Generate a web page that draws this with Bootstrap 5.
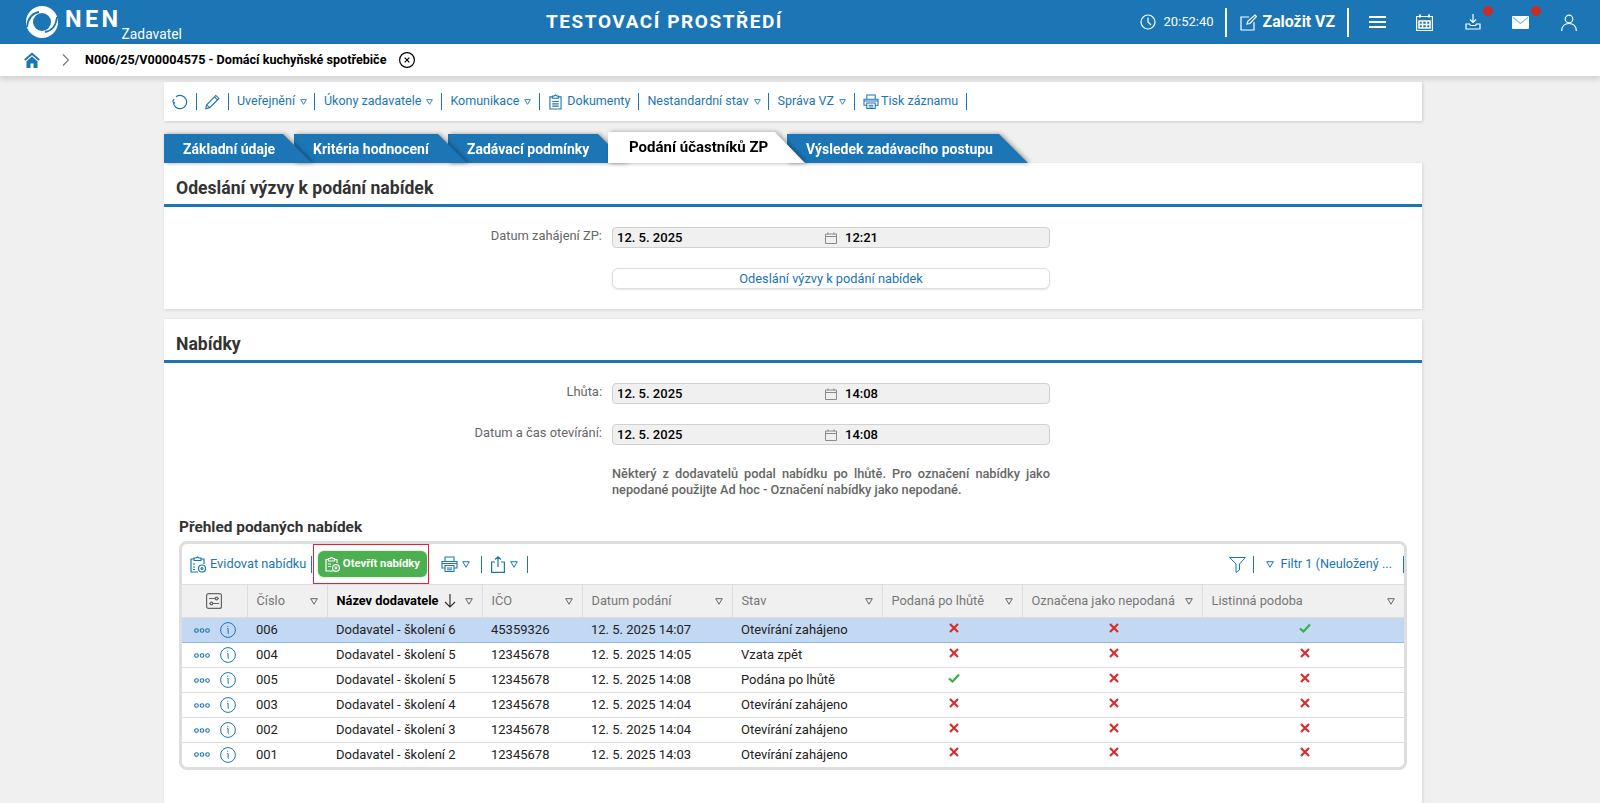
<!DOCTYPE html>
<html lang="cs"><head><meta charset="utf-8"><title>NEN</title>
<link href="https://cdn.jsdelivr.net/npm/bootstrap@5.3.0/dist/css/bootstrap.min.css" rel="stylesheet">
<style>
:root{--nen:#1c75b4}
html,body{height:100%;overflow:hidden}
body{font-family:Roboto,"Liberation Sans",sans-serif;background:#f0f0f0;font-size:13px;color:#222}
svg.i{fill:none;stroke:currentColor;stroke-width:1.2;display:block;flex:none}
.page{height:803px}
.topbar{height:44px;background:var(--nen);color:#fff;padding:0}
.brand-wrap{width:546px;padding-left:26px}
.nen{font-weight:700;font-size:23.5px;letter-spacing:3.4px;margin-left:7px;line-height:1;margin-top:-4px}
.zad{font-size:13.8px;align-self:flex-end;line-height:1;margin-bottom:2px}
.env{font-weight:700;font-size:19px;letter-spacing:1.56px;width:240px;white-space:nowrap}
.tb-right{margin-left:auto;height:44px}
.tb-time{margin-left:7px;margin-right:11px;font-size:13px}
.vbar{width:2px;height:29px;background:#fff}
.zal{font-weight:700;font-size:15.8px;margin:0 12px 0 6px}
.dot{position:absolute;width:10px;height:10px;border-radius:50%;background:#c92a2a;top:-8px;right:-12px}
.crumb{height:32px;background:#fff;padding-left:24px;box-shadow:0 3px 6px rgba(0,0,0,.14);position:relative;z-index:5}
.crumb b{font-weight:700;font-size:12.6px;color:#000;margin-left:16px;margin-right:13px}
.main{width:1258px;margin-left:164px}
.toolbar{height:39px;margin-top:6px;background:#fff;box-shadow:1px 1px 3px rgba(0,0,0,.15);padding-left:8px;color:var(--nen);font-size:12.5px}
.toolbar span.t,.ttb span.t{white-space:nowrap}
.sep{width:1px;height:17px;background:var(--nen);flex:none}
.tri{width:8px;height:7px;color:var(--nen);flex:none}
.toolbar .tri{width:7px;height:6px;margin-left:5px}
.toolbar .sep{margin:0 8.5px 0 7.5px}
.tabs{height:31px;margin-top:11px;align-items:flex-end;position:relative;z-index:2}
.tabw{filter:drop-shadow(2px 0 2px rgba(0,0,0,.35));position:relative}
.tab{display:block;height:29px;background:var(--nen);color:#fff;font-weight:700;font-size:14px;line-height:30px;padding-left:19px;white-space:nowrap;text-decoration:none;clip-path:polygon(0 0,calc(100% - 29px) 0,100% 100%,0 100%)}
.tab.on{height:31px;background:#fff;color:#000;font-size:15px;line-height:30px;padding-left:21px;clip-path:polygon(0 0,calc(100% - 30px) 0,100% 100%,0 100%)}
.sec{background:#fff;box-shadow:1px 1px 3px rgba(0,0,0,.12)}
.sec-h{height:44px;border-bottom:3px solid var(--nen);padding:9px 0 0 12px;font-size:17.6px;font-weight:700;color:#333;line-height:33px;margin:0}
.frow{display:flex;align-items:center;height:21px}
.flab{width:438px;text-align:right;color:#666;font-size:12.9px;margin-right:10px;margin-top:-4px}
.fld{width:438px;height:21px;background:#f0f0f0;border:1px solid #d0d0d0;border-radius:4px;display:flex;align-items:center;padding-left:4px;color:#000;font-weight:500;font-size:13px}
.fld .d{width:208px}
.fld svg{color:#8a8a8a;margin-right:8px}
.btn-out{display:block;width:438px;height:21px;margin-left:448px;background:#fff;border:1px solid #ddd;border-radius:6px;box-shadow:0 1px 2px rgba(0,0,0,.1);color:var(--nen);font-size:12.8px;line-height:19px;text-align:center;padding:0;text-decoration:none}
.msg{width:438px;margin-left:448px;color:#666;font-weight:500;font-size:12.75px;line-height:15.5px;text-align:justify}
.subh{font-weight:700;font-size:15.4px;color:#333;margin:0 0 0 15px;line-height:20px}
.grid-box{margin:4px 0 0 15px;width:1228px;border:3px solid #dedede;border-radius:8px;overflow:hidden;background:#fff}
.ttb{height:40px;color:var(--nen);font-size:12.8px;padding-left:8px}
.redbox{position:relative;border:1px solid #e5203a;height:40px;width:116px;margin-left:1px;display:flex;align-items:center;justify-content:center}
.green{height:26px;width:109px;margin-left:2px;background:#4caf50;color:#fff;border:0;border-radius:6px;font-size:11.3px;font-weight:700;padding:0;display:flex;align-items:center;justify-content:center;gap:3px;box-shadow:0 0 2px rgba(76,175,80,.6)}
.tbl{table-layout:fixed;width:1222px;margin:0;font-size:13px;--bs-table-bg:transparent}
.tbl th{height:33px;background:#f0f0f0;color:#777;font-weight:400;font-size:12.8px;border:0;border-top:1px solid #ddd;border-bottom:1px solid #ddd;border-right:1px solid #ddd;padding:0 9px;vertical-align:middle;white-space:nowrap}
.tbl th.b{color:#000;font-weight:700}
.tbl th>div{display:flex;align-items:center;justify-content:space-between}
.tbl td{height:25px;padding:0 0 0 9px;border-bottom:1px solid #ddd;color:#222;vertical-align:middle;white-space:nowrap}
.tbl tr:last-child td{border-bottom:0;height:24px}
.tbl tr.sel td{background:#c2d8f3;border-bottom-color:#8fbbec}
.tbl td.c{padding:0 0 5px 3px}
.tbl td.c svg{display:block;margin:0 auto}
.tbl td.x{color:#d32f2f}.tbl td.ok{color:#35b04a}
.acts{display:flex;align-items:center;color:var(--nen);padding-left:3px;gap:10px}
</style></head><body>
<svg class="d-none" xmlns="http://www.w3.org/2000/svg">
<symbol id="tri" viewBox="0 0 8 7"><path d="M.7.7h6.6L4 6.2z" fill="none" stroke="currentColor" stroke-width="1"/></symbol>
<symbol id="cal" viewBox="0 0 12 12"><path d="M.5 2h11v9.5H.5zM.5 4.5h11M3 .5v2M9 .5v2" fill="none" stroke="currentColor"/></symbol>
<symbol id="prn" viewBox="0 0 17 16"><path d="M4 5V1h9v4M4 12H1V5.500h15V12h-3M4 9.500h9v6H4zM6 12h5M6 13.800h5M1 7.500h15" fill="none" stroke="currentColor" stroke-width="1.100"/></symbol>
<symbol id="x" viewBox="0 0 10 10"><path d="M1 1l8 8M9 1L1 9" fill="none" stroke="currentColor" stroke-width="2.200"/></symbol>
<symbol id="ok" viewBox="0 0 12 10"><path d="M1 5.500l3.500 3L11 1.500" fill="none" stroke="currentColor" stroke-width="2.200"/></symbol>
<symbol id="dots" viewBox="0 0 16 5"><g fill="none" stroke="currentColor" stroke-width="1.100"><circle cx="2.500" cy="2.500" r="1.800"/><circle cx="8" cy="2.500" r="1.800"/><circle cx="13.500" cy="2.500" r="1.800"/></g></symbol>
<symbol id="inf" viewBox="0 0 16 16"><circle cx="8" cy="8" r="7.400" fill="none" stroke="currentColor" stroke-width="1"/><path d="M7.200 4.300h1M7.200 6.500h.9v4.200c0 .6.300.8.900.7" fill="none" stroke="currentColor" stroke-width="1"/></symbol>
</svg>
<div class="page d-flex flex-column">
<nav class="navbar topbar flex-nowrap align-items-center">
  <div class="brand-wrap d-flex align-items-center h-100">
    <svg width="32" height="32" viewBox="0 0 32 32"><circle cx="16" cy="16" r="16" fill="#fff"/><circle cx="16" cy="16" r="9" fill="#1c75b4"/><path d="M1 21C2 12 7 7 13 6M31 11C30 20 25 25 19 26" fill="none" stroke="#1c75b4" stroke-width="1.800"/></svg>
    <span class="nen">NEN</span><span class="zad">Zadavatel</span>
  </div>
  <div class="env">TESTOVACÍ PROSTŘEDÍ</div>
  <div class="tb-right d-flex align-items-center">
    <svg class="i" width="16" height="16" viewBox="0 0 16 16"><circle cx="8" cy="8" r="7"/><path d="M8 3.500V8l3 3"/></svg>
    <span class="tb-time">20:52:40</span><span class="vbar"></span>
    <svg class="i" style="margin-left:13px" width="17" height="17" viewBox="0 0 17 17"><path d="M9 3H1v13h13V8M7 10l1-3 7-6 1.500 1.500-6.500 7z"/></svg>
    <span class="zal">Založit VZ</span><span class="vbar"></span>
    <svg class="i" style="margin-left:20px" width="17" height="14" viewBox="0 0 17 14"><path d="M0 2h17M0 7h17M0 12h17" stroke="#fff" stroke-width="2"/></svg>
    <svg class="i" style="margin-left:30px" width="17" height="17" viewBox="0 0 17 17"><path d="M.6 2.500h15.800v14H.6z"/><path d="M4 .5v3M13 .5v3" stroke-width="2"/><path d="M3 7h11v7H3zM6.500 7v7M10.500 7v7M3 10.500h11" stroke-width="1.500"/></svg>
    <span class="position-relative" style="margin-left:32px"><svg class="i" width="16" height="16" viewBox="0 0 16 16"><path d="M8 0v8M5 5.500L8 8.500l3-3M4.500 10H1v5h14v-5h-3.500l-1 1.500h-5z"/></svg><span class="dot"></span></span>
    <span class="position-relative" style="margin-left:31px"><svg class="i" width="17" height="13" viewBox="0 0 17 13"><rect width="17" height="13" rx="1" fill="#fff" stroke="none"/><path d="M1 1.500l7.500 6 7.500-6" stroke="#8dbbdc"/></svg><span class="dot" style="right:-12px;top:-10px"></span></span>
    <svg class="i" style="margin-left:32px;margin-right:23px" width="16" height="17" viewBox="0 0 16 17"><circle cx="8" cy="5" r="3.800"/><path d="M.7 17c0-5 3-7.500 7.300-7.500s7.300 2.500 7.300 7.500"/></svg>
  </div>
</nav>
<div class="crumb d-flex align-items-center">
  <svg width="16" height="16" viewBox="0 0 16 16"><path d="M.8 8L8 1.800 15.200 8" fill="none" stroke="#1c75b4" stroke-width="2"/><path d="M2.500 9.300L8 4.600l5.500 4.700V16H9.500v-4.500h-3V16H2.500z" fill="#1c75b4"/></svg>
  <svg class="i" style="margin-left:22px;color:#777" width="7" height="12" viewBox="0 0 7 12"><path d="M1 .5L6.500 6 1 11.500"/></svg>
  <b>N006/25/V00004575 - Domácí kuchyňské spotřebiče</b>
  <svg class="i" style="color:#000" width="16" height="16" viewBox="0 0 16 16"><circle cx="8" cy="8" r="7.400"/><path d="M5.700 5.700l4.600 4.600M10.300 5.700l-4.600 4.600"/></svg>
</div>
<main class="main flex-grow-1 d-flex flex-column">
  <div class="toolbar d-flex align-items-center">
    <svg class="i" width="16" height="16" viewBox="0 0 16 16"><path d="M4 2.800A6.600 6.600 0 1 1 1.400 8M.4 7.600l1.800-2.400M.4 7.600l2.700 1.600"/></svg><span class="sep"></span>
    <svg class="i" width="15" height="16" viewBox="0 0 16 16"><path d="M.8 15.200l1-4.200L11.500 1l3.400 3.200L5 14zM1.800 11L5 14M10 2.600l3.300 3.200"/></svg><span class="sep"></span>
    <span class="t">Uveřejnění</span><svg class="tri"><use href="#tri"/></svg><span class="sep"></span>
    <span class="t">Úkony zadavatele</span><svg class="tri"><use href="#tri"/></svg><span class="sep"></span>
    <span class="t">Komunikace</span><svg class="tri"><use href="#tri"/></svg><span class="sep"></span>
    <svg class="i" style="margin:0 5px 0 1px" width="13" height="16" viewBox="0 0 14 16"><path d="M4 2.500H1V15.500h12V2.500h-3M4 4h6V1.500H8.500L7 .5 5.500 1.500H4zM3.500 7.500h7M3.500 10h7M3.500 12.500h7"/></svg>
    <span class="t">Dokumenty</span><span class="sep"></span>
    <span class="t">Nestandardní stav</span><svg class="tri"><use href="#tri"/></svg><span class="sep"></span>
    <span class="t">Správa VZ</span><svg class="tri"><use href="#tri"/></svg><span class="sep"></span>
    <svg style="margin-right:2px" width="16" height="15" viewBox="0 0 17 16"><use href="#prn"/></svg>
    <span class="t">Tisk záznamu</span><span class="sep"></span>
  </div>
  <div class="tabs d-flex">
    <div class="tabw" style="z-index:5;width:148px;margin-right:-18px"><a class="tab">Základní údaje</a></div>
    <div class="tabw" style="z-index:4;width:173px;margin-right:-19px"><a class="tab">Kritéria hodnocení</a></div>
    <div class="tabw" style="z-index:3;width:179px;margin-right:-19px"><a class="tab">Zadávací podmínky</a></div>
    <div class="tabw" style="z-index:6;width:197px;margin-right:-18px"><a class="tab on">Podání účastníků ZP</a></div>
    <div class="tabw" style="z-index:2;width:241px"><a class="tab">Výsledek zadávacího postupu</a></div>
  </div>
  <section class="sec" style="height:146px">
    <h2 class="sec-h">Odeslání výzvy k podání nabídek</h2>
    <div class="frow" style="margin-top:20px"><span class="flab">Datum zahájení ZP:</span>
      <div class="fld"><span class="d">12. 5. 2025</span><svg width="12" height="12"><use href="#cal"/></svg><span>12:21</span></div></div>
    <a class="btn-out" style="margin-top:20px">Odeslání výzvy k podání nabídek</a>
  </section>
  <section class="sec flex-grow-1" style="margin-top:10px">
    <h2 class="sec-h">Nabídky</h2>
    <div class="frow" style="margin-top:20px"><span class="flab">Lhůta:</span>
      <div class="fld"><span class="d">12. 5. 2025</span><svg width="12" height="12"><use href="#cal"/></svg><span>14:08</span></div></div>
    <div class="frow" style="margin-top:20px"><span class="flab">Datum a čas otevírání:</span>
      <div class="fld"><span class="d">12. 5. 2025</span><svg width="12" height="12"><use href="#cal"/></svg><span>14:08</span></div></div>
    <p class="msg" style="margin-top:21px;margin-bottom:0">Některý z dodavatelů podal nabídku po lhůtě. Pro označení nabídky jako nepodané použijte Ad hoc - Označení nabídky jako nepodané.</p>
    <h3 class="subh" style="margin-top:20px">Přehled podaných nabídek</h3>
    <div class="grid-box">
      <div class="ttb d-flex align-items-center">
        <svg class="i me-1" width="16" height="17" viewBox="0 0 16 17"><path d="M4 3H1v13h7M11 3h3v5M4 4.500h7V2H9L7.500 1 6 2H4zM3 8h2M3 11h2M3 13.500h2"/><circle cx="12" cy="12.500" r="3.500"/><circle cx="12" cy="12.500" r="1"/></svg>
        <span class="t">Evidovat nabídku</span><span class="sep" style="margin-left:5px"></span>
        <div class="redbox"><button class="green" type="button"><svg class="i" width="15" height="15" viewBox="0 0 15 15"><path d="M3.500 2.500H1V14h7M9.500 2.500H12V6M3.500 4h6V1.500H8L6.500 .5 5 1.500H3.500zM3 7h3M3 9.500h3"/><circle cx="11" cy="11" r="3.400"/><path d="M9.500 11h3M11 9.500v3"/></svg>Otevřít nabídky</button></div>
        <svg style="margin-left:12px" width="17" height="16"><use href="#prn"/></svg><svg class="tri" style="margin-left:4px"><use href="#tri"/></svg><span class="sep" style="margin:0 9px 0 11px"></span>
        <svg class="i" width="14" height="17" viewBox="0 0 14 17"><path d="M4 6H.6v10.400h12.800V6H10M7 11V1M4 3.500L7 .8l3 2.700"/></svg><svg class="tri" style="margin-left:5px"><use href="#tri"/></svg><span class="sep" style="margin-left:9px"></span>
        <svg class="i ms-auto" width="17" height="17" viewBox="0 0 17 17" style="stroke-width:1"><path d="M.7 1.500h15.600L10.500 8v6l-3.500 2.500V8z"/></svg><span class="sep" style="margin-left:7px"></span>
        <svg class="tri" style="margin-left:12px"><use href="#tri"/></svg><span class="t" style="margin-left:6px;font-size:12.7px">Filtr 1 (Neuložený ...</span><span class="sep" style="margin-left:11px"></span>
      </div>
      <table class="table tbl">
        <colgroup><col style="width:65px"><col style="width:80px"><col style="width:155px"><col style="width:100px"><col style="width:150px"><col style="width:150px"><col style="width:140px"><col style="width:180px"><col></colgroup>
        <thead><tr>
          <th class="text-center" style="padding:0"><svg class="i mx-auto" style="color:#666" width="16" height="16" viewBox="0 0 16 16"><rect x=".6" y=".6" width="14.800" height="14.800" rx="2"/><path d="M3 5.500h6M12 5.500h1M3 10.500h1M7 10.500h6"/><circle cx="10.500" cy="5.500" r="1.300"/><circle cx="5.500" cy="10.500" r="1.300"/></svg></th>
          <th><div>Číslo<svg class="tri" style="color:#666"><use href="#tri"/></svg></div></th>
          <th class="b"><div><span class="d-flex align-items-center">Název dodavatele<svg class="i" style="margin-left:6px;color:#333" width="12" height="14" viewBox="0 0 12 14"><path d="M6 0v13M1 8l5 5 5-5"/></svg></span><svg class="tri" style="color:#666"><use href="#tri"/></svg></div></th>
          <th><div>IČO<svg class="tri" style="color:#666"><use href="#tri"/></svg></div></th>
          <th><div>Datum podání<svg class="tri" style="color:#666"><use href="#tri"/></svg></div></th>
          <th><div>Stav<svg class="tri" style="color:#666"><use href="#tri"/></svg></div></th>
          <th><div>Podaná po lhůtě<svg class="tri" style="color:#666"><use href="#tri"/></svg></div></th>
          <th><div>Označena jako nepodaná<svg class="tri" style="color:#666"><use href="#tri"/></svg></div></th>
          <th style="border-right:0"><div>Listinná podoba<svg class="tri" style="color:#666"><use href="#tri"/></svg></div></th>
        </tr></thead>
        <tbody>
          <tr class="sel"><td><div class="acts"><svg width="16" height="5"><use href="#dots"/></svg><svg width="16" height="16"><use href="#inf"/></svg></div></td><td>006</td><td>Dodavatel - školení 6</td><td>45359326</td><td>12. 5. 2025 14:07</td><td>Otevírání zahájeno</td><td class="c x"><svg width="10" height="10"><use href="#x"/></svg></td><td class="c x"><svg width="10" height="10"><use href="#x"/></svg></td><td class="c ok"><svg width="12" height="10"><use href="#ok"/></svg></td></tr>
          <tr><td><div class="acts"><svg width="16" height="5"><use href="#dots"/></svg><svg width="16" height="16"><use href="#inf"/></svg></div></td><td>004</td><td>Dodavatel - školení 5</td><td>12345678</td><td>12. 5. 2025 14:05</td><td>Vzata zpět</td><td class="c x"><svg width="10" height="10"><use href="#x"/></svg></td><td class="c x"><svg width="10" height="10"><use href="#x"/></svg></td><td class="c x"><svg width="10" height="10"><use href="#x"/></svg></td></tr>
          <tr><td><div class="acts"><svg width="16" height="5"><use href="#dots"/></svg><svg width="16" height="16"><use href="#inf"/></svg></div></td><td>005</td><td>Dodavatel - školení 5</td><td>12345678</td><td>12. 5. 2025 14:08</td><td>Podána po lhůtě</td><td class="c ok"><svg width="12" height="10"><use href="#ok"/></svg></td><td class="c x"><svg width="10" height="10"><use href="#x"/></svg></td><td class="c x"><svg width="10" height="10"><use href="#x"/></svg></td></tr>
          <tr><td><div class="acts"><svg width="16" height="5"><use href="#dots"/></svg><svg width="16" height="16"><use href="#inf"/></svg></div></td><td>003</td><td>Dodavatel - školení 4</td><td>12345678</td><td>12. 5. 2025 14:04</td><td>Otevírání zahájeno</td><td class="c x"><svg width="10" height="10"><use href="#x"/></svg></td><td class="c x"><svg width="10" height="10"><use href="#x"/></svg></td><td class="c x"><svg width="10" height="10"><use href="#x"/></svg></td></tr>
          <tr><td><div class="acts"><svg width="16" height="5"><use href="#dots"/></svg><svg width="16" height="16"><use href="#inf"/></svg></div></td><td>002</td><td>Dodavatel - školení 3</td><td>12345678</td><td>12. 5. 2025 14:04</td><td>Otevírání zahájeno</td><td class="c x"><svg width="10" height="10"><use href="#x"/></svg></td><td class="c x"><svg width="10" height="10"><use href="#x"/></svg></td><td class="c x"><svg width="10" height="10"><use href="#x"/></svg></td></tr>
          <tr><td><div class="acts"><svg width="16" height="5"><use href="#dots"/></svg><svg width="16" height="16"><use href="#inf"/></svg></div></td><td>001</td><td>Dodavatel - školení 2</td><td>12345678</td><td>12. 5. 2025 14:03</td><td>Otevírání zahájeno</td><td class="c x"><svg width="10" height="10"><use href="#x"/></svg></td><td class="c x"><svg width="10" height="10"><use href="#x"/></svg></td><td class="c x"><svg width="10" height="10"><use href="#x"/></svg></td></tr>
        </tbody>
      </table>
    </div>
  </section>
</main>
</div>
<script src="https://cdn.jsdelivr.net/npm/bootstrap@5.3.0/dist/js/bootstrap.bundle.min.js"></script>
</body></html>
